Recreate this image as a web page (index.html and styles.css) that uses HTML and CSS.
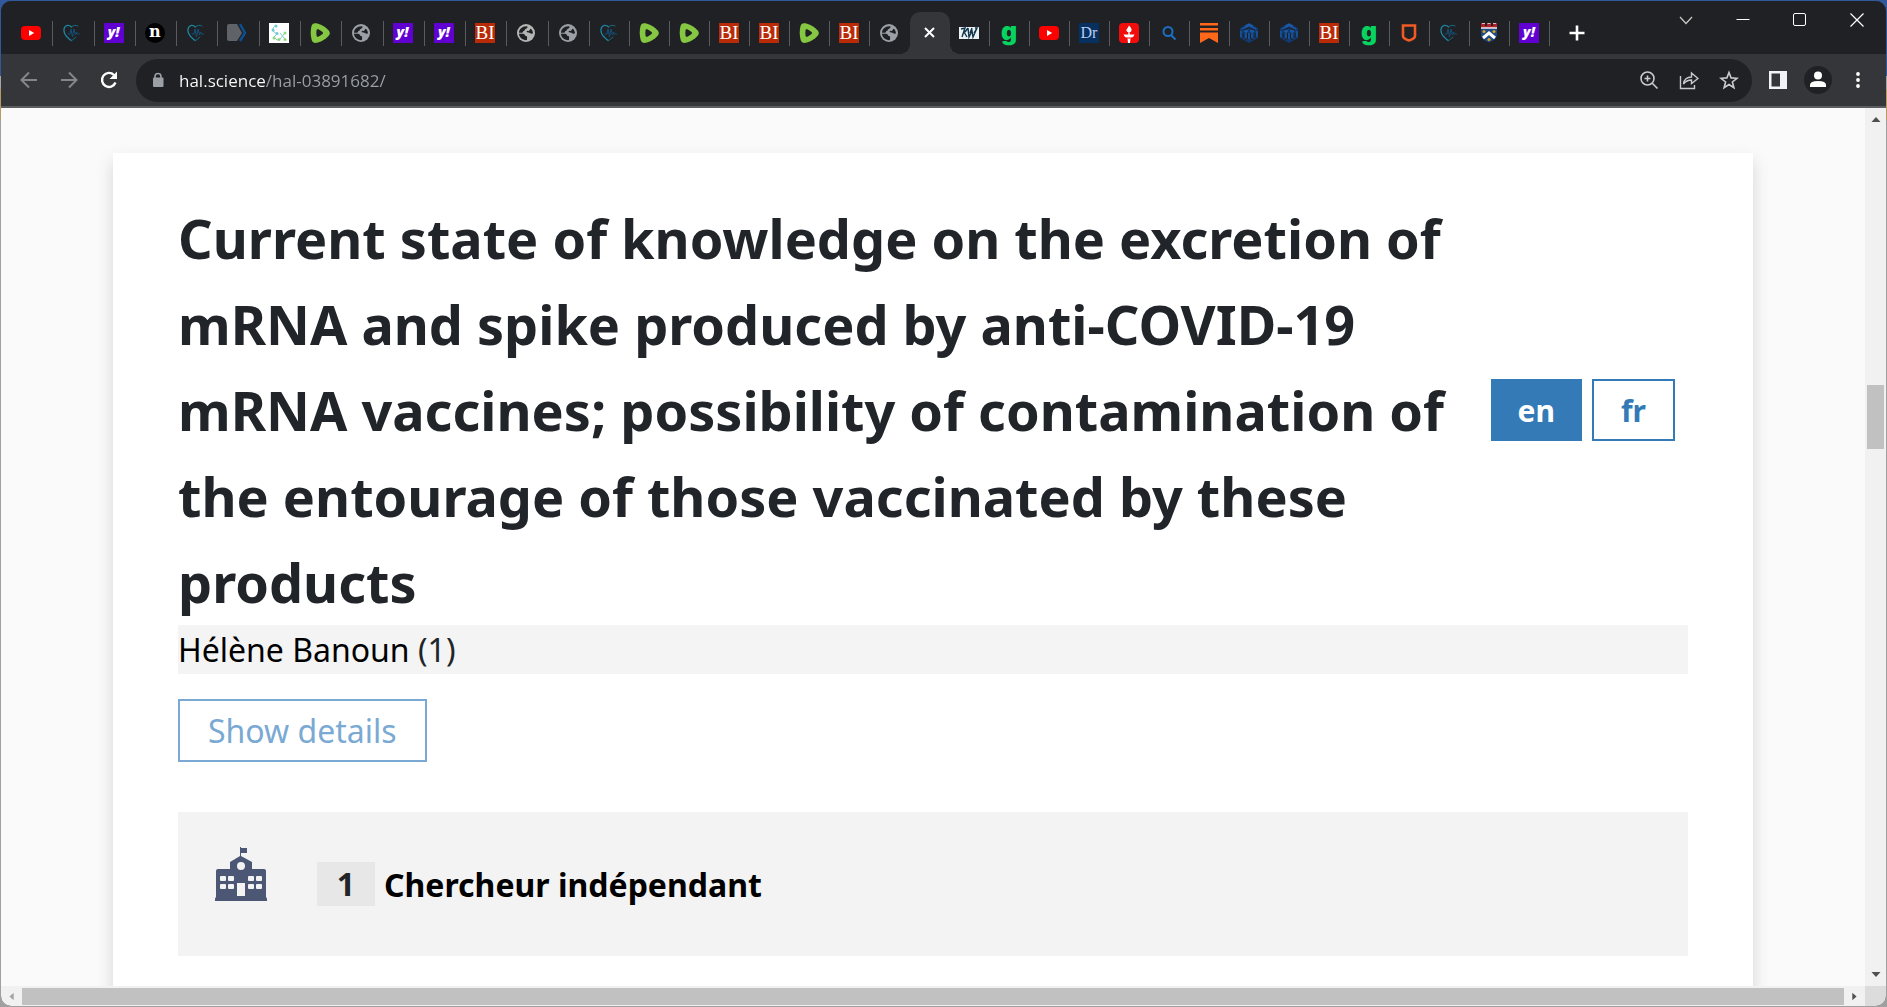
FILE: index.html
```html
<!DOCTYPE html>
<html lang="en">
<head>
  <meta charset="UTF-8">
  <title>hal.science/hal-03891682</title>
  <meta name="viewport" content="width=device-width, initial-scale=1">
  <link rel="stylesheet" href="styles.css">
</head>
<body>
  <!-- shared icons -->
  <svg class="sprite" aria-hidden="true">
    <symbol id="i-youtube" viewBox="0 0 20 20"><rect y="3" width="20" height="14" rx="4" fill="#f00"/><path d="M8 7l5.200 3L8 13z" fill="#fff"/></symbol>
    <symbol id="i-heart" viewBox="0 0 20 20"><g fill="none" stroke-linecap="round"><path d="M9.500 4C7 1.500 3.500 1.800 2.300 5c-1.300 4 2 9 6.700 12.500" stroke="#1d87a3" stroke-width="1.300"/><path d="M9.500 4c2-2 4.500-2.200 6.500-1M9 17.500c2-.5 3.700-2 4.800-3.500" stroke="#186d85" stroke-width="1"/><path d="M6 11h2l1-5 1.500 8 1.500-8 1.500 6 1-3 1 2h2" stroke="#12507a" stroke-width="1"/></g></symbol>
    <symbol id="i-chevrons" viewBox="0 0 20 20"><path d="M0 3q0-2 2-2h8l5 9-5 8H2q-2 0-2-2z" fill="#5f6368"/><path d="M13 1l5 9-5 8" fill="none" stroke="#0b4f94" stroke-width="2.500"/></symbol>
    <symbol id="i-molecule" viewBox="0 0 20 20"><path fill="#fff" d="M0 0h20v20H0z"/><path d="M7 2L4 5v3l4 3M8 11l-3 3 3 3 3-1M11 10l5 6M16 10l-5 6" fill="none" stroke="#7fd0c6"/><g fill="#6cc9d3"><circle cx="7" cy="3" r="1.500"/><circle cx="4" cy="7" r="1.500"/><circle cx="8" cy="10.500" r="1.500"/></g><g fill="#8ed87d"><circle cx="5" cy="15" r="1.500"/><circle cx="10" cy="16.500" r="1.500"/><circle cx="16" cy="10" r="1.500"/><circle cx="16" cy="16.500" r="1.500"/></g></symbol>
    <symbol id="i-rumble" viewBox="0 0 20 20"><path d="M1.500 3C2.500 0 5 0 8 .8c4 1.200 7.500 3.400 10.500 6.400 1.800 2 1.800 3.800 0 5.800-3 3.200-6.500 5.400-10.500 6.500-3 .8-5.500.5-6.300-2.500C.4 12 .4 8 1.500 3z" fill="#85c742"/><path d="M6.500 7.500c.2-1.500 1.200-1.600 2.300-1 1.400.8 2.600 1.600 3.700 2.500.7.700.7 1.300 0 2-1.100 1-2.300 1.800-3.700 2.500-1.100.6-2.100.4-2.300-1-.2-1.700-.2-3.300 0-5z" fill="#202124"/></symbol>
    <symbol id="i-globe" viewBox="0 0 20 20"><circle cx="10" cy="10" r="9" fill="currentColor"/><path d="M11 3.200c1.200.5.300 2.300-1 2.500-1.600.3-.6 1.900-2.300 2.300-1.200.3-.4 1.500-1.700 1.700H3c0-3.600 3.600-7 8-6.500zM2.900 10.800h4.300c2 .2 1.300 2.200 3.100 2.300 1.300.2.700 1.800.7 4-4.500.4-7.700-2.600-8.100-6.300zM10.500 8.500c.6-1 1.600-.4 2.600-.8.900-.4.300-1.700 1.700-2 1.200 1 2.200 2.700 2.200 4.600-1 .7-2 .5-2.600-.1-1.100-1-3.400-.2-3.900-1.700z" fill="#202124"/></symbol>
    <symbol id="i-kw" viewBox="0 0 20 20"><path fill="#e8f1f3" d="M0 4h20v12H0z"/><path d="M2 6l4-1-3 9M5 9l3 5M6 9l3-4M9 5l1 9 3-6 1 6 4-9M13 5l-2 5M16 5h2l-3 5" fill="none" stroke="#12344a" stroke-width="1.400"/></symbol>
    <symbol id="i-torch" viewBox="0 0 20 20"><rect width="20" height="20" rx="4" fill="#f20d0d"/><path d="M10 2.500c2 2 3.400 4 2.200 5.800-.8 1.200-3.600 1.200-4.400 0C6.600 6.500 8.800 5.500 10 2.500zM9.300 8h1.400v4H9.300zM4.500 11.500h11q-.5 2.500-3.500 3H8q-3-.5-3.500-3zM8.500 15.500h3L11 20H9z" fill="#fff"/></symbol>
    <symbol id="i-search" viewBox="0 0 20 20"><g fill="none" stroke="#1a6fc4" stroke-width="2"><circle cx="9" cy="8.500" r="4.500"/><path d="M12 12l4.500 4.500"/></g></symbol>
    <symbol id="i-substack" viewBox="0 0 20 20"><path fill="#ff6719" d="M1 0h18v2.500H1zM1 5h18v2.500H1zM1 9.500h18V20l-9-5-9 5z"/></symbol>
    <symbol id="i-cube" viewBox="0 0 20 20"><path d="M10 0l9 5v10l-9 5-9-5V5z" fill="#113a70"/><g fill="none" stroke="#1d5ba8" stroke-width="1.300"><path d="M10 1l4 2.300M6 3.300L10 1M3 6l7-3.500L17 6M5 8h4M11 8h4M7 8v7M13 8v7M10 10v6M2 8v6M18 8v6"/></g><path d="M4 7l6-2 6 2M4 10v5M16 10v5M8.500 10v6M11.500 10v6M6 17l2-1M14 17l-2-1" fill="none" stroke="#202124"/></symbol>
    <symbol id="i-shield" viewBox="0 0 20 20"><path d="M4 2.500h12v10.500q0 2.500-6 4.500-6-2-6-4.500z" fill="none" stroke="#f15a24" stroke-width="2.600"/></symbol>
    <symbol id="i-crest" viewBox="0 0 20 20"><path d="M2 4h16v8q0 4-8 7.500Q2 16 2 12z" fill="#1d4a86"/><path d="M2 0h4v3h2V0h4v3h2V0h4v5H2z" fill="#b3202c"/><path d="M2 5h16M3 0h3M8.500 0h3M14 0h3" stroke="#eee" stroke-width="1.500"/><path d="M4 15l6-5 6 5" fill="none" stroke="#fff" stroke-width="3"/><g fill="#d9a520"><circle cx="5" cy="8.500" r="1.500"/><circle cx="15" cy="8.500" r="1.500"/><circle cx="10" cy="16.500" r="1.500"/></g></symbol>
  </svg>

  <div class="window">
    <header class="tab-strip">
      <nav class="tabs tabs-wide" aria-label="Tabs">
        <button class="tab"><svg><use href="#i-youtube"/></svg></button>
        <button class="tab"><svg><use href="#i-heart"/></svg></button>
        <button class="tab"><span class="fav yahoo">y!</span></button>
        <button class="tab"><span class="fav n">n</span></button>
        <button class="tab"><svg><use href="#i-heart"/></svg></button>
        <button class="tab"><svg><use href="#i-chevrons"/></svg></button>
        <button class="tab"><svg><use href="#i-molecule"/></svg></button>
        <button class="tab"><svg><use href="#i-rumble"/></svg></button>
        <button class="tab"><svg><use href="#i-globe"/></svg></button>
        <button class="tab"><span class="fav yahoo">y!</span></button>
        <button class="tab"><span class="fav yahoo">y!</span></button>
        <button class="tab"><span class="fav bi">BI</span></button>
        <button class="tab light"><svg><use href="#i-globe"/></svg></button>
        <button class="tab"><svg><use href="#i-globe"/></svg></button>
      </nav>
      <nav class="tabs" aria-label="More tabs">
        <button class="tab"><svg><use href="#i-heart"/></svg></button>
        <button class="tab"><svg><use href="#i-rumble"/></svg></button>
        <button class="tab"><svg><use href="#i-rumble"/></svg></button>
        <button class="tab"><span class="fav bi">BI</span></button>
        <button class="tab"><span class="fav bi">BI</span></button>
        <button class="tab"><svg><use href="#i-rumble"/></svg></button>
        <button class="tab"><span class="fav bi">BI</span></button>
        <button class="tab last"><svg><use href="#i-globe"/></svg></button>
        <button class="tab active" aria-label="Close tab"><svg viewBox="0 0 20 20"><path d="M6 5l9 9M15 5l-9 9" stroke="#fff" stroke-width="2"/></svg></button>
        <button class="tab"><svg><use href="#i-kw"/></svg></button>
        <button class="tab"><span class="fav g">g</span></button>
        <button class="tab"><svg><use href="#i-youtube"/></svg></button>
        <button class="tab"><span class="fav dr">Dr</span></button>
        <button class="tab"><svg><use href="#i-torch"/></svg></button>
        <button class="tab"><svg><use href="#i-search"/></svg></button>
        <button class="tab"><svg><use href="#i-substack"/></svg></button>
        <button class="tab"><svg><use href="#i-cube"/></svg></button>
        <button class="tab"><svg><use href="#i-cube"/></svg></button>
        <button class="tab"><span class="fav bi">BI</span></button>
        <button class="tab"><span class="fav g">g</span></button>
        <button class="tab"><svg><use href="#i-shield"/></svg></button>
        <button class="tab"><svg><use href="#i-heart"/></svg></button>
        <button class="tab"><svg><use href="#i-crest"/></svg></button>
        <button class="tab"><span class="fav yahoo">y!</span></button>
      </nav>
      <button class="new-tab" aria-label="New tab"><svg viewBox="0 0 20 20"><path d="M10 2.500v15M2.500 10h15" stroke="#fff" stroke-width="2.600"/></svg></button>
      <div class="window-controls">
        <button aria-label="Search tabs"><svg viewBox="0 0 20 20"><path d="M4 7l6 6.500L16 7" fill="none" stroke="#ccc" stroke-width="1.200"/></svg></button>
        <button aria-label="Minimize"><svg viewBox="0 0 20 20"><path d="M3.500 9.500h13" stroke="#fff"/></svg></button>
        <button aria-label="Maximize"><svg viewBox="0 0 20 20"><rect x="3.500" y="3.500" width="12" height="12" rx="1.500" fill="none" stroke="#fff"/></svg></button>
        <button aria-label="Close"><svg viewBox="0 0 20 20"><path d="M3.500 3.500l13 13M16.500 3.500l-13 13" stroke="#fff" stroke-width="1.200"/></svg></button>
      </div>
    </header>

    <div class="toolbar">
      <div class="nav-buttons">
        <button class="dim" aria-label="Back"><svg viewBox="0 0 20 20"><path d="M18 10H3M10 2.500L2.500 10l7.500 7.500" fill="none" stroke="currentColor" stroke-width="2"/></svg></button>
        <button class="dim" aria-label="Forward"><svg viewBox="0 0 20 20"><path d="M2 10h15M10 2.500l7.500 7.500-7.500 7.500" fill="none" stroke="currentColor" stroke-width="2"/></svg></button>
        <button aria-label="Reload"><svg viewBox="0 0 20 20"><path d="M16.500 12.500A7 7 0 1 1 15 5" fill="none" stroke="#fff" stroke-width="2.400"/><path d="M18 1.500V9h-7.500z" fill="#fff"/></svg></button>
      </div>
      <div class="omnibox">
        <svg class="lock" viewBox="0 0 12 16"><path d="M3 7V4.500a3 3 0 0 1 6 0V7" fill="none" stroke="#9aa0a6" stroke-width="1.600"/><rect x="1" y="5.500" width="10.500" height="9.500" rx="1" fill="#9aa0a6"/></svg>
        <input type="text" class="url" aria-label="Address" value="hal.science/hal-03891682/">
        <button aria-label="Zoom"><svg viewBox="0 0 20 20"><g fill="none" stroke="#c8cacd" stroke-width="1.600"><circle cx="8.500" cy="8.500" r="6.500"/><path d="M13 13l5.500 5.500"/><path d="M8.500 5.500v6M5.500 8.500h6"/></g></svg></button>
        <button aria-label="Share"><svg viewBox="0 0 20 20"><path d="M1.500 6v12.500h14V15M4.500 14q1-7 8-7V3l6.500 5.500-6.500 5v-3.500q-5 0-8 4z" fill="none" stroke="#c8cacd" stroke-width="1.400"/></svg></button>
        <button aria-label="Bookmark"><svg viewBox="0 0 20 20"><path d="M10 2.500l2.100 5.400 5.900.4-4.600 3.700 1.500 5.700-4.900-3.200-4.900 3.200 1.500-5.700L2 8.300l5.900-.4z" fill="none" stroke="#c8cacd" stroke-width="1.600"/></svg></button>
      </div>
      <div class="menu-buttons">
        <button aria-label="Side panel"><svg viewBox="0 0 20 20"><path d="M1 1h18v18H1z" fill="#f1f3f4"/><path d="M3.500 3.500H12v13H3.500z" fill="#35363a"/></svg></button>
        <button class="avatar" aria-label="Profile"><svg viewBox="0 0 20 20"><circle cx="10" cy="5.500" r="4" fill="#fff"/><path d="M2 17v-2q0-4 8-4t8 4v2z" fill="#fff"/></svg></button>
        <button aria-label="Menu"><svg viewBox="0 0 20 20"><g fill="#fff"><circle cx="10" cy="4" r="1.900"/><circle cx="10" cy="10" r="1.900"/><circle cx="10" cy="16" r="1.900"/></g></svg></button>
      </div>
    </div>

    <div class="viewport">
      <main class="page">
        <article class="card">
          <div class="title-row">
            <h1>Current state of knowledge on the excretion of mRNA and spike produced by anti-COVID-19 mRNA vaccines; possibility of contamination of the entourage of those vaccinated by these products</h1>
            <div class="langs">
              <button class="lang selected">en</button>
              <button class="lang">fr</button>
            </div>
          </div>
          <div class="authors"><a href="#">Hélène Banoun</a> (1)</div>
          <button class="details">Show details</button>
          <div class="affiliation">
            <svg class="school" viewBox="0 0 52 54"><path fill="#4b5775" d="M25 0h1v1h6v5h-6v3l11 6v7h12q2 0 2 2v26q1 1 1 2v2H0v-2q0-1 1-2V24q0-2 2-2h12v-7l10-6z"/><g fill="#f3f3f3"><ellipse cx="26" cy="19" rx="4" ry="4"/><path d="M22 36h8v13h-8z"/><rect x="5" y="29" width="6" height="5" rx="1"/><rect x="13" y="29" width="6" height="5" rx="1"/><rect x="33" y="29" width="6" height="5" rx="1"/><rect x="41" y="29" width="6" height="5" rx="1"/><rect x="5" y="37" width="6" height="5" rx="1"/><rect x="13" y="37" width="6" height="5" rx="1"/><rect x="33" y="37" width="6" height="5" rx="1"/><rect x="41" y="37" width="6" height="5" rx="1"/></g></svg>
            <span class="number">1</span>
            <a href="#">Chercheur indépendant</a>
          </div>
        </article>
      </main>
      <div class="scroll-y">
        <svg viewBox="0 0 20 20"><path d="M5.500 12h9L10 7z" fill="#505050"/></svg>
        <div class="track"><div class="thumb"></div></div>
        <svg viewBox="0 0 20 20"><path d="M5.500 6h9L10 11z" fill="#505050"/></svg>
      </div>
      <div class="scroll-x">
        <svg viewBox="0 0 20 20"><path d="M12 5.500v9L7 10z" fill="#a3a3a3"/></svg>
        <div class="thumb"></div>
        <svg viewBox="0 0 20 20"><path d="M8 5.500v9l5-4.500z" fill="#505050"/></svg>
      </div>
      <div class="corner"></div>
    </div>
  </div>
</body>
</html>
```
FILE: styles.css
```css
* {
  box-sizing: border-box;
}
body {
  margin: 0;
  height: 100vh;
  padding: 1px;
  background: linear-gradient(#30589a 76px, #a5a5a5 76px, #a5a5a5 89px, #b89b62 89px, #b89b62 120px, #a0a0a0 120px);
  font-family: "Noto Sans", "Open Sans", sans-serif;
  overflow: hidden;
}
button {
  border: none;
  padding: 0;
  background: none;
  font-family: inherit;
  cursor: pointer;
}
svg {
  display: block;
  width: 20px;
  height: 20px;
}
.sprite {
  position: absolute;
  width: 0;
  height: 0;
}
.window {
  display: flex;
  flex-direction: column;
  height: 100%;
  border-radius: 10px;
  overflow: hidden;
  background: #35363a;
}

/* tabs */
.tab-strip {
  display: flex;
  flex: none;
  height: 53px;
  padding-left: 11px;
  background: #202124;
}
.tabs {
  display: flex;
  padding-top: 11px;
}
.tabs-wide {
  width: 578px;
}
.tab {
  display: flex;
  align-items: center;
  width: 40px;
  height: 42px;
  padding-left: 9px;
  color: #9aa0a6;
  background: linear-gradient(#5a5b5f, #5a5b5f) right 9px / 1px 25px no-repeat;
}
.tabs-wide .tab {
  flex: 1;
}
.tab.light {
  color: #b5b5b5;
}
.tab.last {
  background: none;
}
.tab.active {
  position: relative;
  background: #35363a;
  border-radius: 10px 10px 0 0;
}
.tab.active::before,
.tab.active::after {
  content: "";
  position: absolute;
  bottom: 0;
  width: 10px;
  height: 10px;
}
.tab.active::before {
  right: 100%;
  background: radial-gradient(circle at 0 0, #202124 10px, #35363a 10px);
}
.tab.active::after {
  left: 100%;
  background: radial-gradient(circle at 100% 0, #202124 10px, #35363a 10px);
}
.fav {
  width: 20px;
  height: 20px;
  line-height: 20px;
  font-size: 16px;
  font-weight: 700;
  text-align: center;
  color: #fff;
}
.fav.yahoo {
  background: #6001d2;
  font-family: "Open Sans", sans-serif;
  font-style: italic;
  font-weight: 800;
  font-size: 14px;
  line-height: 18px;
}
.fav.n {
  background: #000;
  border-radius: 50%;
  font-family: "DejaVu Serif", serif;
  line-height: 17px;
}
.fav.bi {
  background: #b92b07;
  font-family: "Liberation Serif", serif;
  font-weight: 400;
  font-size: 19px;
}
.fav.dr {
  background: #06305f;
  color: #b9cdf0;
  font-family: "Liberation Serif", serif;
  font-weight: 400;
}
.fav.g {
  color: #07d460;
  font-family: Inter, sans-serif;
  font-weight: 900;
  font-size: 25px;
  line-height: 16px;
}
.new-tab {
  margin: 11px 0 0 17px;
}
.window-controls {
  display: flex;
  align-items: flex-start;
  gap: 37px;
  margin: 9px 19px 0 auto;
}

/* toolbar */
.toolbar {
  display: flex;
  align-items: center;
  flex: none;
  height: 54px;
  border-bottom: 2px solid #5c5d61;
}
.nav-buttons {
  display: flex;
  gap: 20px;
  width: 135px;
  padding-left: 18px;
}
.nav-buttons .dim {
  color: #85868a;
}
.omnibox {
  display: flex;
  align-items: center;
  gap: 20px;
  flex: 1;
  height: 43px;
  padding: 0 13px 0 16px;
  border-radius: 22px;
  background: #202124;
}
.lock {
  width: 12px;
  height: 16px;
}
.url {
  flex: 1;
  margin-left: -5px;
  padding: 0;
  border: none;
  outline: none;
  font-family: "Open Sans", sans-serif;
  font-size: 17px;
  color: transparent;
  background: linear-gradient(90deg, #fff 86px, #9aa0a6 86px);
  -webkit-background-clip: text;
  background-clip: text;
}
.menu-buttons {
  display: flex;
  align-items: center;
  gap: 16px;
  padding: 0 18px 0 16px;
}
.avatar {
  padding: 4px;
  border-radius: 50%;
  background: #202124;
}

/* page */
.viewport {
  display: grid;
  grid-template-columns: 1fr 21px;
  grid-template-rows: 1fr 20px;
  flex: 1;
  min-height: 0;
}
.page {
  min-height: 0;
  padding: 45px 112px 0;
  background: #fafafa;
  overflow: hidden;
}
.card {
  min-height: 100vh;
  padding: 42px 65px;
  background: #fff;
  box-shadow: 0 8px 16px rgba(0, 0, 0, 0.15);
  color: #212529;
}
.title-row {
  display: flex;
  align-items: center;
  justify-content: space-between;
  padding-right: 13px;
}
h1 {
  max-width: 1290px;
  margin: 0;
  font-size: 54px;
  font-weight: 700;
  line-height: 86px;
}
.langs {
  display: flex;
  flex: none;
  gap: 10px;
}
.lang {
  min-width: 83px;
  height: 62px;
  padding: 0 25px;
  border: 2px solid #337ab7;
  font-size: 30px;
  font-weight: 700;
  color: #337ab7;
}
.lang.selected {
  background: #337ab7;
  color: #fff;
}
.authors {
  height: 49px;
  line-height: 49px;
  background: #f4f4f4;
  font-size: 32px;
}
.card a {
  color: #000;
  text-decoration: none;
}
.details {
  height: 63px;
  margin-top: 25px;
  padding: 0 28px;
  border: 2px solid #7aaad3;
  font-size: 32px;
  color: #7aaad3;
}
.affiliation {
  display: flex;
  align-items: center;
  height: 144px;
  margin-top: 50px;
  padding-left: 37px;
  background: #f3f3f3;
  font-size: 32px;
  font-weight: 700;
}
.school {
  width: 52px;
  height: 54px;
  margin: 0 50px 20px 0;
}
.number {
  width: 58px;
  height: 44px;
  margin-right: 9px;
  line-height: 44px;
  text-align: center;
  background: #e7e7e7;
}

/* scrollbars */
.scroll-y,
.scroll-x {
  display: flex;
  background: #f1f1f1;
}
.scroll-y {
  flex-direction: column;
  align-items: center;
  padding: 2px 2px 0;
}
.track {
  flex: 1;
  width: 100%;
  padding-top: 255px;
}
.track .thumb {
  height: 64px;
  background: #c1c1c1;
}
.scroll-x {
  padding: 2px 1px 1px;
}
.scroll-x svg {
  height: 17px;
}
.scroll-x .thumb {
  flex: 1;
  background: #c1c1c1;
}
.corner {
  background: #dcdcdc;
}
```
